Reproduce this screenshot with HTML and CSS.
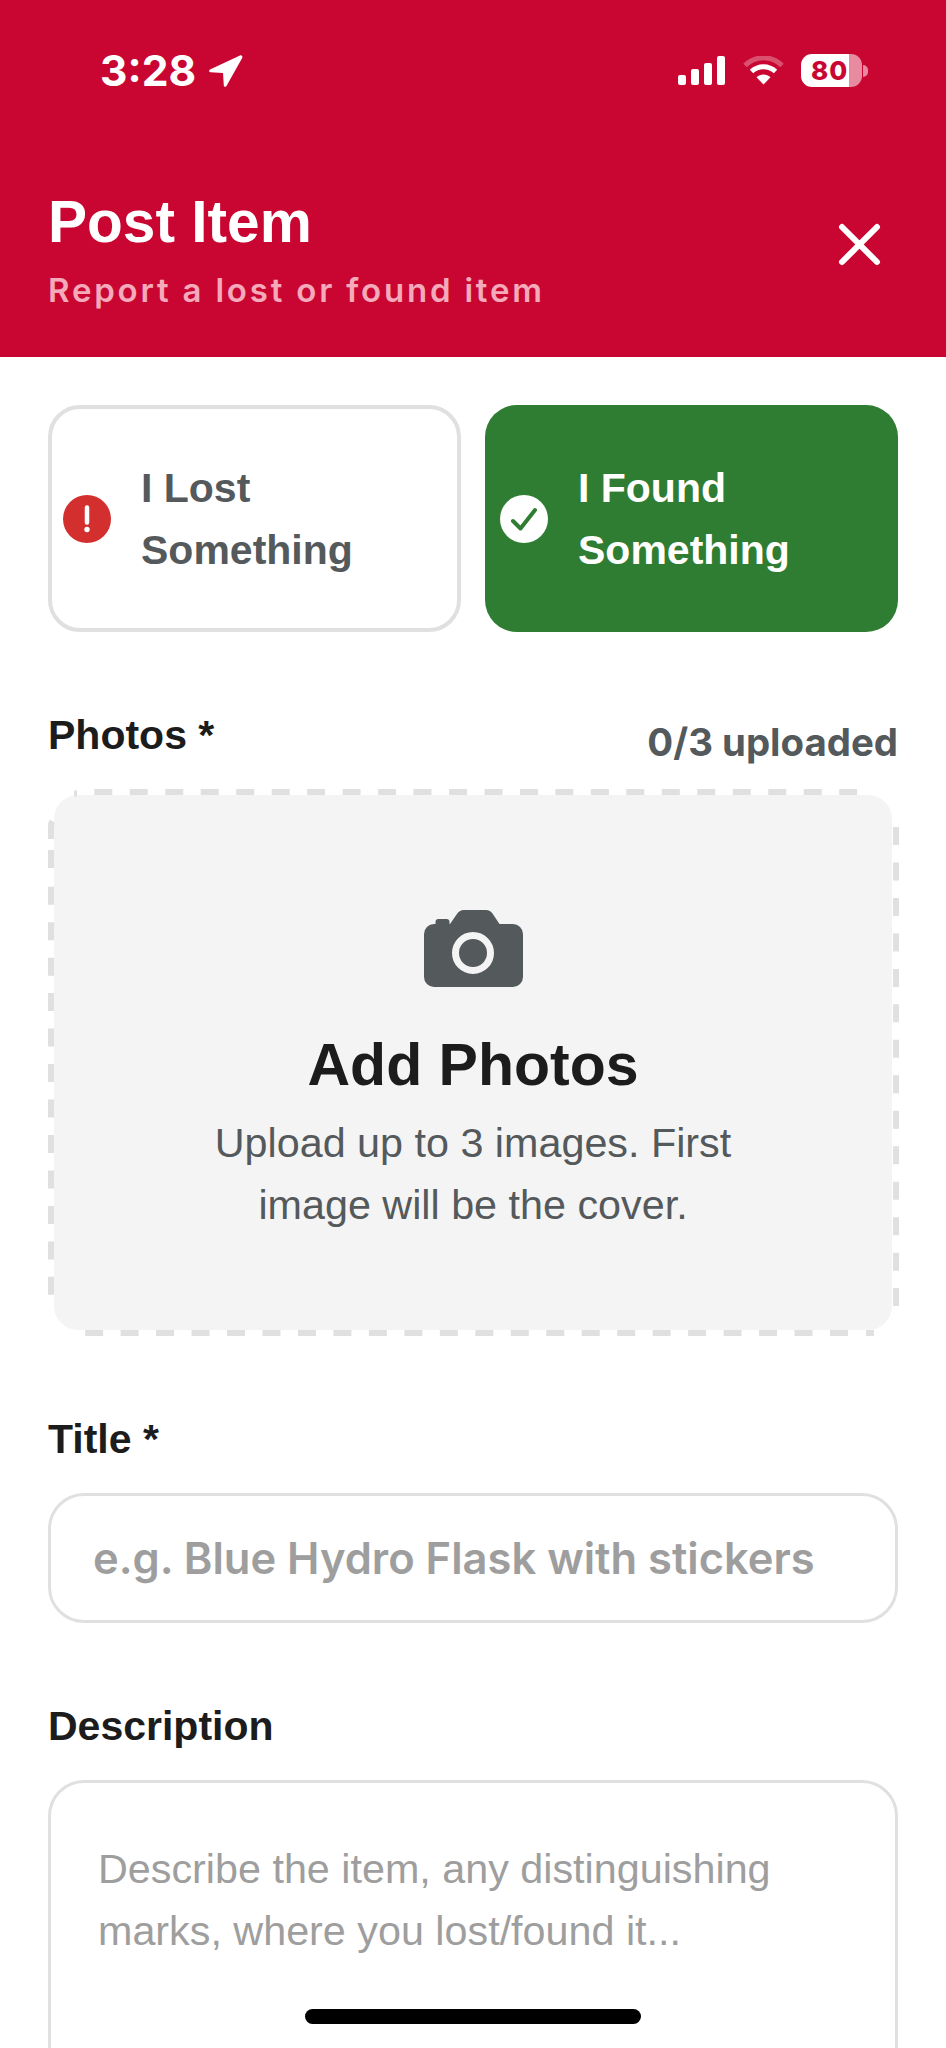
FILE: index.html
```html
<!DOCTYPE html>
<html lang="en">
<head>
<meta charset="utf-8">
<title>Post Item</title>
<link rel="stylesheet" href="styles.css">
</head>
<body>
<div class="screen">
  <header class="header">
    <div class="status">
      <div class="status-left">
        <span class="time">3:28</span>
        <svg class="loc" width="36" height="36" viewBox="0 0 36 36"><path d="M33 2.500 3 16.500c-1.400.8-1 2.700.5 2.800l12.500.6.800 12.500c.1 1.500 2.200 1.800 2.800.4L35.300 4.700c.6-1.500-.9-2.900-2.300-2.200z" fill="#fff"/></svg>
      </div>
      <div class="status-right">
        <svg class="signal" width="47" height="29" viewBox="0 0 47 29"><rect x="0" y="19" width="8" height="10" rx="2" fill="#fff"/><rect x="13" y="13" width="8" height="16" rx="2" fill="#fff"/><rect x="26" y="7" width="8" height="22" rx="2" fill="#fff"/><rect x="39" y="0" width="8" height="29" rx="2" fill="#fff"/></svg>
        <svg class="wifi" width="41" height="29" viewBox="0 0 41 29"><path d="M2 9.500C12.500-.8 28.500-.8 39 9.500" fill="none" stroke="#fff" stroke-opacity=".3" stroke-width="5"/><path d="M8.500 15.500c7-6.500 17-6.500 24 0" fill="none" stroke="#fff" stroke-width="5"/><path d="M13.500 21.200c4.300-3.600 9.700-3.600 14 0L20.500 28.500z" fill="#fff"/></svg>
        <div class="battery"><span class="battery-fill">80</span><span class="battery-nub"></span></div>
      </div>
    </div>
    <div class="title-row">
      <div>
        <h1 class="title">Post Item</h1>
        <p class="subtitle">Report a lost or found item</p>
      </div>
      <svg class="close" width="45" height="45" viewBox="0 0 45 45"><path d="M5 5 40 40M40 5 5 40" stroke="#fff" stroke-width="6" stroke-linecap="round"/></svg>
    </div>
  </header>

  <main class="form">
    <div class="toggle">
      <div class="choice choice-lost">
        <svg class="choice-icon" width="48" height="48" viewBox="0 0 48 48"><circle cx="24" cy="24" r="24" fill="#d32f2f"/><path d="M24 12.500v15" stroke="#fff" stroke-width="4.500" stroke-linecap="round"/><circle cx="24" cy="34.500" r="2.700" fill="#fff"/></svg>
        <span class="choice-text">I Lost<br>Something</span>
      </div>
      <div class="choice choice-found">
        <svg class="choice-icon" width="48" height="48" viewBox="0 0 48 48"><circle cx="24" cy="24" r="24" fill="#fff"/><path d="M13 26l7.500 7.500L35 15" fill="none" stroke="#2e7d32" stroke-width="4" stroke-linecap="round" stroke-linejoin="round"/></svg>
        <span class="choice-text">I Found<br>Something</span>
      </div>
    </div>

    <div class="photos-head">
      <span class="label">Photos *</span>
      <span class="count">0/3 uploaded</span>
    </div>
    <div class="upload">
      <svg class="dash" width="851" height="547" viewBox="0 0 851 547"><path d="M46.300 3H809M848 38V517.500M800 544H37M3 97.700V510M3 79V61M3 50V38Q3 33 4.500 31.500M818 544H826M26 4.500H29" fill="none" stroke="#e0e0e0" stroke-width="6" stroke-dasharray="18 17.470"/></svg>
      <svg class="camera" width="99" height="77" viewBox="0 0 99 77"><path d="M10 14h1.500V12a3 3 0 0 1 3-3h8a3 3 0 0 1 3 3v2h.500l7.300-10.500A8 8 0 0 1 40 0h22a8 8 0 0 1 6.500 3.500L75.500 14H89a10 10 0 0 1 10 10v43a10 10 0 0 1-10 10H10A10 10 0 0 1 0 67V24a10 10 0 0 1 10-10z" fill="#54595c"/><circle cx="49" cy="43" r="17.500" fill="none" stroke="#f4f4f4" stroke-width="7"/></svg>
      <div class="upload-title">Add Photos</div>
      <p class="upload-text">Upload up to 3 images. First<br>image will be the cover.</p>
    </div>

    <label class="label label-title">Title *</label>
    <div class="input"><span class="placeholder">e.g. Blue Hydro Flask with stickers</span></div>

    <label class="label label-desc">Description</label>
    <div class="textarea"><span class="area-placeholder">Describe the item, any distinguishing<br>marks, where you lost/found it...</span></div>
  </main>

  <div class="home"></div>
</div>
</body>
</html>
```
FILE: styles.css
```css
* { box-sizing: border-box; }
html, body { margin: 0; padding: 0; background: #fff; }
body { font-family: "Liberation Sans", Arial, sans-serif; }
.screen { position: relative; width: 946px; height: 2048px; overflow: hidden; background: #fff; }

.header { height: 357px; background: #c90632; padding: 54px 65px 0 48px; }
.status { display: flex; justify-content: space-between; align-items: center; height: 33px; padding: 0 13px 0 52px; }
.status-left { display: flex; align-items: center; gap: 11px; }
.time { font-family: Inter, sans-serif; font-weight: 700; font-size: 42.500px; line-height: 33px; color: #fff; }
.loc { display: block; }
.status-right { display: flex; align-items: center; }
.signal { display: block; margin-right: 18px; }
.wifi { display: block; margin-right: 17px; }
.battery { display: flex; align-items: center; }
.battery-fill { display: block; width: 61px; height: 33px; border-radius: 11px; background: linear-gradient(90deg, #fff 0, #fff 48px, #e88aa0 48px); color: #c90632; font-family: Inter, sans-serif; font-weight: 800; font-size: 26px; line-height: 33px; padding-left: 10px; letter-spacing: 1px; }
.battery-nub { display: block; width: 5px; height: 12px; margin-left: 1px; border-radius: 0 6px 6px 0; background: #e88aa0; }

.title-row { display: flex; justify-content: space-between; align-items: flex-start; padding-top: 100px; }
.title { margin: 0; font-size: 58.600px; line-height: 70px; font-weight: 700; color: #fff; }
.subtitle { margin: 13px 0 0; font-family: Inter, sans-serif; font-weight: 600; font-size: 33px; line-height: 40px; letter-spacing: 2.800px; color: #f4aabb; }
.close { display: block; margin-top: 35px; margin-right: -1px; }

.form { padding: 48px 48px 0; }
.toggle { display: grid; grid-template-columns: 413px 413px; gap: 24px; }
.choice { height: 227px; border-radius: 32px; display: flex; align-items: center; gap: 30px; padding-left: 15px; font-weight: 700; font-size: 41px; line-height: 62px; }
.choice-lost { border: 4px solid #e0e0e0; color: #54595c; padding-left: 11px; }
.choice-found { background: #2e7d32; color: #fff; }
.choice-icon { display: block; flex: none; }

.photos-head { display: flex; justify-content: space-between; align-items: flex-start; margin-top: 80px; height: 54px; }
.photos-head .label { padding-top: 1px; }
.label { display: block; font-size: 41px; line-height: 45px; font-weight: 700; color: #1c1c1c; }
.count { font-family: Inter, sans-serif; font-weight: 700; font-size: 38.400px; line-height: 45px; color: #54595c; padding-top: 8px; }

.upload { position: relative; height: 547px; margin-top: 23px; padding-top: 121px; text-align: center; }
.upload::before { content: ""; position: absolute; inset: 6px; background: #f4f4f4; border-radius: 24px; }
.dash { position: absolute; left: 0; top: 0; display: block; }
.camera { position: relative; display: block; margin: 0 auto; }
.upload-title { position: relative; font-size: 59px; line-height: 64px; font-weight: 700; color: #1c1c1c; margin-top: 46px; }
.upload-text { position: relative; margin: 15px 0 0; font-size: 41.300px; line-height: 62px; color: #54595c; }

.label-title { margin-top: 81px; }
.input { height: 130px; margin-top: 31px; border: 3px solid #e0e0e0; border-radius: 36px; display: flex; align-items: center; padding-left: 42px; }
.placeholder { font-family: Inter, sans-serif; font-weight: 600; font-size: 43.500px; color: #9e9e9e; }
.label-desc { margin-top: 81px; }
.textarea { height: 400px; margin-top: 31px; border: 3px solid #e0e0e0; border-radius: 36px; padding: 55px 0 0 47px; font-size: 41.300px; line-height: 62px; color: #9e9e9e; }

.home { position: absolute; left: 305px; top: 2009px; width: 336px; height: 15px; border-radius: 8px; background: #000; }
```
